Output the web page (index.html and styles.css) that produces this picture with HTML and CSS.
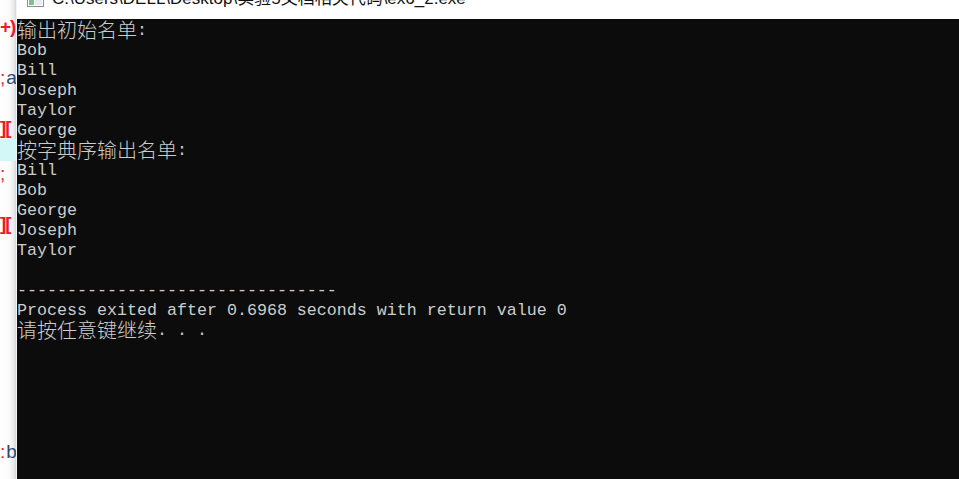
FILE: index.html
```html
<!DOCTYPE html>
<html lang="zh-CN">
<head>
<meta charset="utf-8">
<title>ex6_2.exe</title>
<link rel="stylesheet" href="styles.css">
</head>
<body>
<div class="screen">
  <div class="editor">
    <div class="eline l1"><span class="red b">+)</span></div>
    <div class="eline l2"><span class="red">;</span><span class="ink">a</span></div>
    <div class="eline l3"><span class="red b">][</span></div>
    <div class="band"></div>
    <div class="eline l4"><span class="red">;</span></div>
    <div class="eline l5"><span class="red b">][</span></div>
    <div class="eline l6"><span class="red">:</span><span class="ink">b</span></div>
  </div>
  <div class="console">
    <div class="titlebar">
      <svg class="appicon" width="17" height="14" viewBox="0 0 17 14">
        <rect x="0.5" y="0.5" width="16" height="13" fill="#ffffff" stroke="#8a8f96"/>
        <rect x="1" y="1" width="15" height="3" fill="#c9d3dc"/>
        <rect x="2" y="5" width="5" height="7" fill="#7fbf8f"/>
        <rect x="8" y="5" width="7" height="7" fill="#e6ebef"/>
      </svg>
      <div class="title">C:\Users\DELL\Desktop\实验5文档相关代码\ex6_2.exe</div>
    </div>
    <div class="terminal">
      <div class="line"><span class="cjk">输出初始名单</span>:</div>
      <div class="line">Bob</div>
      <div class="line">Bill</div>
      <div class="line">Joseph</div>
      <div class="line">Taylor</div>
      <div class="line">George</div>
      <div class="line"><span class="cjk">按字典序输出名单</span>:</div>
      <div class="line">Bill</div>
      <div class="line">Bob</div>
      <div class="line">George</div>
      <div class="line">Joseph</div>
      <div class="line">Taylor</div>
      <div class="line"></div>
      <div class="line">--------------------------------</div>
      <div class="line">Process exited after 0.6968 seconds with return value 0</div>
      <div class="line"><span class="cjk">请按任意键继续</span>. . .</div>
    </div>
  </div>
</div>
</body>
</html>
```
FILE: styles.css
```css
html, body {
  margin: 0;
  padding: 0;
  width: 959px;
  height: 479px;
  overflow: hidden;
  background: #0c0c0c;
}

.screen {
  display: flex;
  width: 959px;
  height: 479px;
}

/* background editor strip on the left */
.editor {
  width: 16px;
  flex: none;
  height: 479px;
  overflow: hidden;
  background: linear-gradient(to right, #ffffff 0, #fbfbfb 9px, #e9e9e9 14px, #d6d6d6 16px);
  border-right: 1px solid #f4f4f4;
  display: flex;
  flex-direction: column;
  font-family: "Liberation Sans", "DejaVu Sans", sans-serif;
  font-size: 19px;
  line-height: 18px;
}

.eline {
  height: 18px;
  white-space: nowrap;
  letter-spacing: -1px;
}

.l1 { margin-top: 18px; }
.l2 { margin-top: 33px; }
.l3 { margin-top: 32px; }
.l4 { margin-top: 4px; }
.l5 { margin-top: 32px; }
.l6 { margin-top: 210px; }

.band {
  height: 22px;
  margin-top: 2px;
  background: #d3f6f6;
}

.red { color: #ea1b2e; }
.red.b { font-weight: bold; }
.ink { color: #2b4a6f; margin-left: 2px; }

/* console window */
.console {
  flex: 1;
  display: flex;
  flex-direction: column;
  min-width: 0;
}

.titlebar {
  height: 19px;
  flex: none;
  background: #ffffff;
  overflow: hidden;
  display: flex;
  align-items: flex-start;
}

.appicon {
  margin-left: 10px;
  margin-top: -7px;
  flex: none;
}

.title {
  margin-left: 8px;
  margin-top: -11px;
  font-family: "Liberation Sans", "Noto Sans CJK SC", sans-serif;
  font-size: 17px;
  line-height: 20px;
  color: #111111;
  white-space: nowrap;
}

.terminal {
  flex: 1;
  background: #0c0c0c;
  padding-top: 2px;
  color: #cccccc;
  font-family: "Liberation Mono", "Noto Sans CJK SC", monospace;
  font-size: 16.667px;
}

.line {
  height: 20px;
  line-height: 20px;
  white-space: pre;
}

.cjk {
  font-family: "Noto Sans CJK SC", sans-serif;
  font-size: 20px;
  line-height: 18px;
  vertical-align: top;
  font-weight: 300;
}
```
